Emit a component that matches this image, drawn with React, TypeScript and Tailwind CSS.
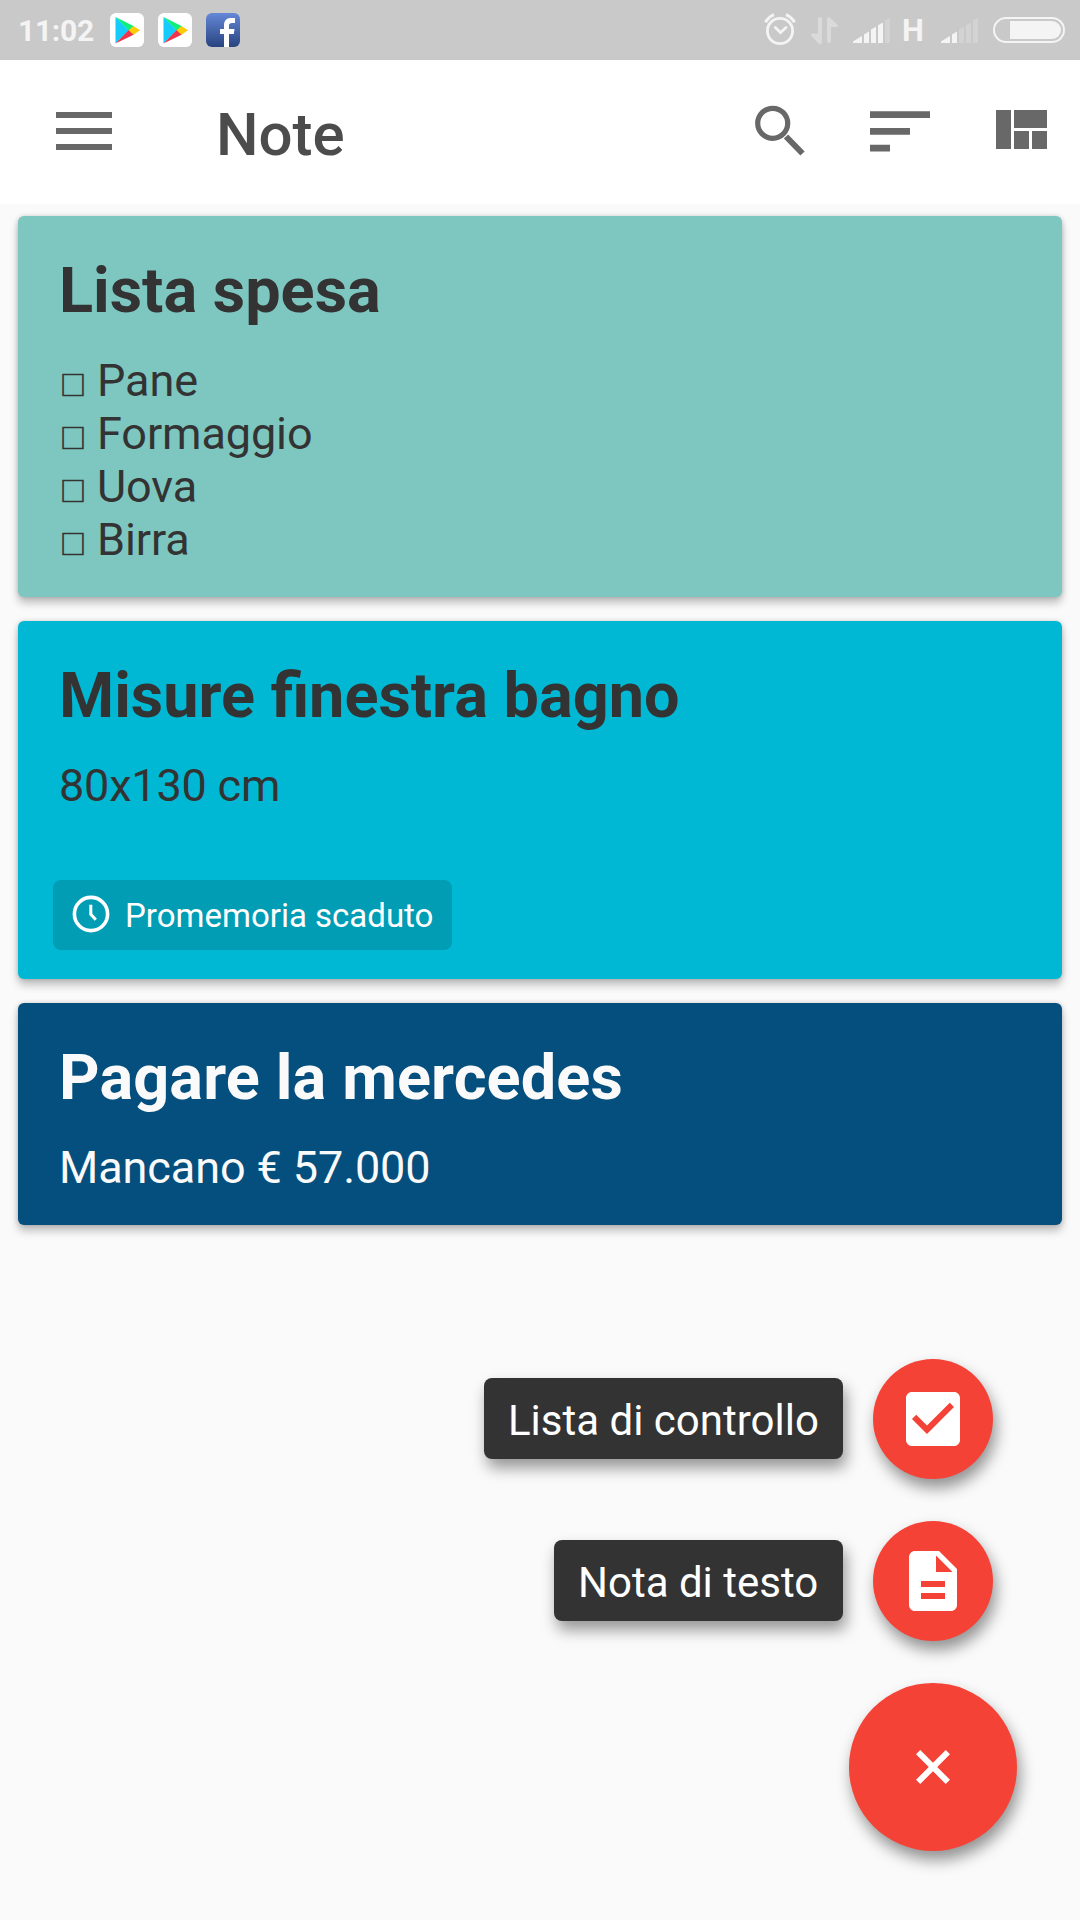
import React from "react";

function PlayIcon() {
  return (
    <svg width="34" height="34" viewBox="0 0 34 34" className="shrink-0">
      <rect width="34" height="34" rx="6" fill="#fff" />
      <path d="M5.5 4v26.5L19 17.2z" fill="#15cbfb" />
      <path d="M5.5 4 24 13.2 19 17.6z" fill="#0af079" />
      <path d="M5.5 30.5 24 21.4 19 16.8z" fill="#f0324a" />
      <path d="M23.4 12.9 30 17.3l-6.6 4.4L18.8 17.3z" fill="#ffcb05" />
    </svg>
  );
}

function FacebookIcon() {
  return (
    <svg width="34" height="34" viewBox="0 0 34 34" className="shrink-0">
      <defs>
        <linearGradient id="fb" x1="0" y1="0" x2="0" y2="1">
          <stop offset="0" stopColor="#6488d8" />
          <stop offset="1" stopColor="#28437f" />
        </linearGradient>
      </defs>
      <rect width="34" height="34" rx="6" fill="url(#fb)" />
      <path
        d="M18 34V21h-4v-5h4v-3.500C18 7.500 20.500 5 25 5h4v5h-3c-2.300 0-3 .800-3 2.800V16h5.500l-.700 5H23v13z"
        fill="#fff"
      />
    </svg>
  );
}

function SignalBars({ level }: { level: number }) {
  const bars = [
    "M0 24.700v-1.200L8 18.500q1-.500 1 .500v5.700q0 .300-.300.300H.500q-.500 0-.500-.300z",
    "M11 16.500 16 13.600V25h-5z",
    "M18 11.500 23 8.700V25h-5z",
    "M25 7.300 30 4.500V25h-5z",
    "M32 2.500 37 0V25h-5z",
  ];
  return (
    <svg width="37" height="25" viewBox="0 0 37 25" className="mt-[18px] shrink-0">
      {bars.map((d, i) => (
        <path key={i} d={d} fill={i < level ? "#f4f4f4" : "#d3d3d3"} />
      ))}
    </svg>
  );
}

function StatusBar() {
  return (
    <div className="flex h-[60px] items-start bg-[#c9c9c9]">
      <span className="ml-[18px] mt-[12px] w-[92px] whitespace-nowrap text-[30px] font-bold leading-[38px] tracking-[-0.3px] text-[#f4f4f4]">
        11:02
      </span>
      <div className="mt-[13px] flex gap-[14px]">
        <PlayIcon />
        <PlayIcon />
        <FacebookIcon />
      </div>
      <div className="ml-auto flex items-start">
        <svg width="32" height="33" viewBox="0 0 32 33" className="mr-[15px] mt-[13px]" fill="none" stroke="#f4f4f4">
          <circle cx="16" cy="18" r="12.600" strokeWidth="2.800" />
          <path d="M11.300 14.500 16.500 19.500 22 14.500" strokeWidth="2.800" strokeLinecap="round" />
          <path d="M1.500 9.300Q4.500 4 10 1.600M30.500 9.300Q27.500 4 22 1.600" strokeWidth="3.200" />
        </svg>
        <svg width="28" height="27" viewBox="0 0 28 27" className="mr-[14px] mt-[17px]" fill="#dadada">
          <path d="M7 2q0-2 2-2t2 2v23q0 2-2 2-1 0-1.500-.600L0 18.500q-.500-2 .800-2H7z" />
          <path d="M20 24q0 2-2 2t-2-2V2q0-2 1.500-2 .800 0 1.500.600L27 8.500q.500 1.500-.500 1.500H20z" />
        </svg>
        <SignalBars level={4} />
        <span className="ml-[12px] mt-[12px] w-[30px] text-[31px] font-bold leading-[38px] text-[#f4f4f4]">H</span>
        <div className="ml-[9px] flex">
          <SignalBars level={2} />
        </div>
        <svg width="72" height="26" viewBox="0 0 72 26" className="ml-[15px] mr-[15px] mt-[17px]">
          <rect x="1" y="1" width="70" height="24" rx="12" fill="none" stroke="#f4f4f4" strokeWidth="2" />
          <path d="M17 4h42a9 9 0 0 1 0 18H17z" fill="#f4f4f4" />
        </svg>
      </div>
    </div>
  );
}

function AppBar() {
  return (
    <header className="flex h-[144px] items-start bg-white">
      <div className="ml-[56px] mt-[52px] flex w-[56px] flex-col gap-[10px]">
        <div className="h-[6px] bg-[#686868]" />
        <div className="h-[6px] bg-[#686868]" />
        <div className="h-[6px] bg-[#686868]" />
      </div>
      <h1 className="ml-[104px] mt-[40px] text-[60px] font-medium leading-[70px] text-[#4c4c4c]">Note</h1>
      <div className="ml-auto mr-[33px] flex items-start">
        <svg width="51" height="51" viewBox="0 0 51 51" className="mr-[64px] mt-[45px]" fill="none" stroke="#686868">
          <circle cx="17.700" cy="18.300" r="15" strokeWidth="5.200" />
          <path d="M31 31.500 47.500 48.500" strokeWidth="6" />
        </svg>
        <svg width="60" height="41" viewBox="0 0 60 41" className="mr-[66px] mt-[51px]" fill="#686868">
          <path d="M0 .300h60v6.700H0zM0 17h40v6.700H0zM0 33.700h20v6.700H0z" />
        </svg>
        <svg width="51" height="39" viewBox="0 0 51 39" className="mt-[50px]" fill="#686868">
          <path d="M0 0h15v39H0zM18 0h33v18H18zM18 21h15v18H18zM36 21h15v18H36z" />
        </svg>
      </div>
    </header>
  );
}

function Card({
  title,
  titleClass = "",
  className,
  children,
}: {
  title: string;
  titleClass?: string;
  className: string;
  children: React.ReactNode;
}) {
  return (
    <article
      className={
        "rounded-[6px] pl-[41px] pt-[38px] shadow-[0_6px_9px_rgba(0,0,0,0.24),0_0_5px_rgba(0,0,0,0.16)] " + className
      }
    >
      <h2 className={"mb-[26px] whitespace-nowrap text-[63px] font-bold leading-[74px] " + titleClass}>{title}</h2>
      {children}
    </article>
  );
}

function ActionRow({ label, width, children }: { label: string; width: string; children: React.ReactNode }) {
  return (
    <div className="mb-[42px] mr-[24px] flex items-start gap-[30px]">
      <span
        className={
          "mt-[19px] block h-[81px] whitespace-nowrap rounded-[8px] bg-[#333333] pl-[24px] pt-[18px] text-[42px] leading-[49px] text-white shadow-[3px_9px_15px_rgba(0,0,0,0.4)] " +
          width
        }
      >
        {label}
      </span>
      <div className="flex size-[120px] items-center justify-center rounded-full bg-[#f44336] shadow-[3px_9px_15px_rgba(0,0,0,0.42)]">
        <svg width="72" height="72" viewBox="0 0 24 24" fill="#fff">
          {children}
        </svg>
      </div>
    </div>
  );
}

export default function App() {
  return (
    <div className="relative h-[1920px] w-[1080px] overflow-hidden bg-[#fafafa] font-['Roboto',sans-serif]">
      <StatusBar />
      <AppBar />
      <main className="flex flex-col gap-[24px] px-[18px] pt-[12px]">
        <Card title="Lista spesa" className="h-[381px] bg-[#7ec7c0] text-[#333333]">
          <ul className="text-[45px] leading-[53px] tracking-[-0.1px]">
            {["Pane", "Formaggio", "Uova", "Birra"].map((item) => (
              <li key={item} className="flex h-[53px]">
                <span className="w-[38px] pl-px font-['Noto_Sans_CJK_JP',sans-serif] text-[26px] leading-[59px] [-webkit-text-stroke:0.6px_#333333]">
                  □
                </span>
                {item}
              </li>
            ))}
          </ul>
        </Card>
        <Card title="Misure finestra bagno" className="h-[358px] bg-[#00b8d4] text-[#333333]">
          <p className="text-[45px] leading-[53px] tracking-[-0.2px]">80x130 cm</p>
          <div className="-ml-[6px] mt-[68px] flex h-[70px] w-[399px] items-center rounded-[8px] bg-[#009db5] pl-[19px] text-white">
            <svg width="38" height="38" viewBox="0 0 38 38" className="mb-[2px] mr-[15px] shrink-0" fill="none" stroke="#fff">
              <circle cx="19" cy="19" r="16.600" strokeWidth="3.600" />
              <path d="M18.800 9.800v9.500l5 5.500" strokeWidth="3" />
            </svg>
            <span className="whitespace-nowrap text-[33px] leading-[39px]">Promemoria scaduto</span>
          </div>
        </Card>
        <Card
          title="Pagare la mercedes"
          titleClass="tracking-[0.13px]"
          className="h-[222px] bg-[#054f7e] text-[#fafafa]"
        >
          <p className="text-[45px] leading-[53px] tracking-[-0.1px]">Mancano € 57.000</p>
        </Card>
      </main>
      <div className="absolute bottom-[69px] right-[63px] flex flex-col items-end">
        <ActionRow label="Lista di controllo" width="w-[359px]">
          <path d="M19 3H5c-1.110 0-2 .900-2 2v14c0 1.100.890 2 2 2h14c1.110 0 2-.900 2-2V5c0-1.100-.890-2-2-2zm-9 14l-5-5 1.410-1.410L10 14.170l7.590-7.590L19 8l-9 9z" />
        </ActionRow>
        <ActionRow label="Nota di testo" width="w-[289px]">
          <path d="M14 2H6c-1.100 0-1.990.900-1.990 2L4 20c0 1.100.890 2 1.990 2H18c1.100 0 2-.900 2-2V8l-6-6zm2 16H8v-2h8v2zm0-4H8v-2h8v2zm-3-5V3.500L18.500 9H13z" />
        </ActionRow>
        <div className="flex size-[168px] items-center justify-center rounded-full bg-[#f44336] shadow-[3px_9px_15px_rgba(0,0,0,0.42)]">
          <svg width="72" height="72" viewBox="0 0 24 24" fill="#fff" className="rotate-45">
            <path d="M19 13h-6v6h-2v-6H5v-2h6V5h2v6h6v2z" />
          </svg>
        </div>
      </div>
    </div>
  );
}
